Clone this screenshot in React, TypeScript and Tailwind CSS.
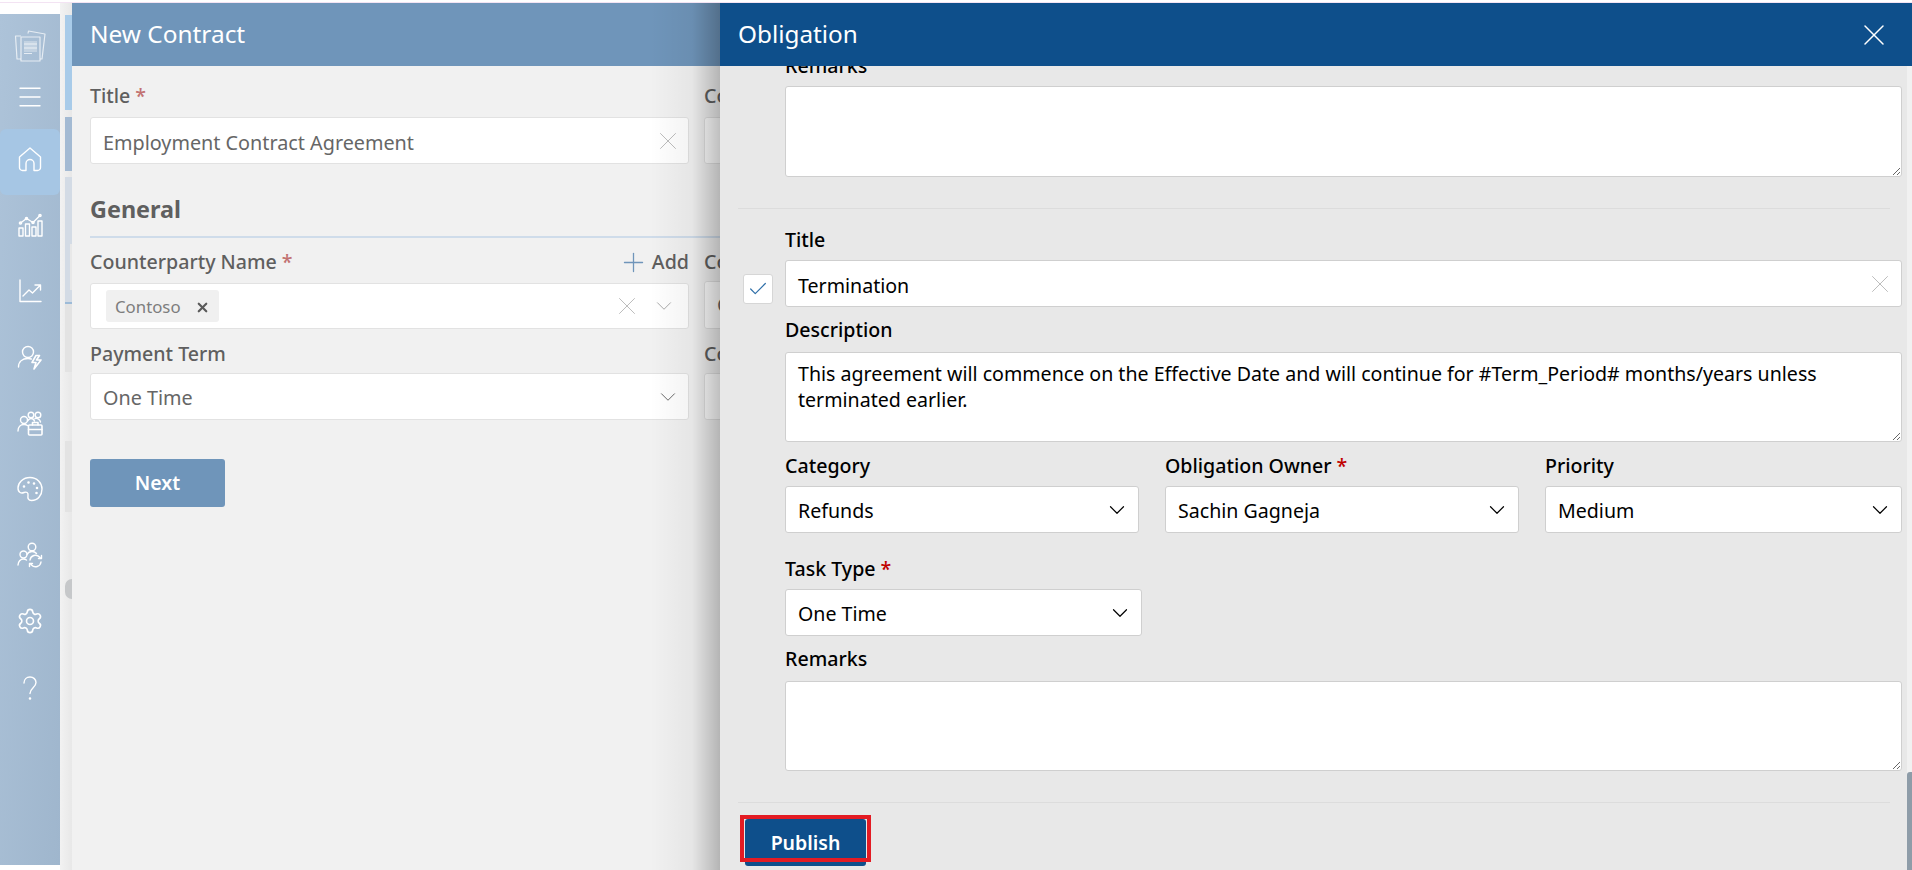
import React from 'react';
import { Menu, Settings, X, ChevronDown, Check, Plus } from 'lucide-react';

const font = { fontFamily: '"Noto Sans", "Open Sans", sans-serif' };

function Icon({ children }: { children: React.ReactNode }) {
  return (
    <svg width="30" height="30" viewBox="0 0 30 30" fill="none" stroke="#ffffff" strokeWidth="1.4" strokeLinecap="round" strokeLinejoin="round">
      {children}
    </svg>
  );
}

function SideItem({ active, children }: { active?: boolean; children: React.ReactNode }) {
  return (
    <div className={`flex h-[66px] items-center justify-center rounded-md pb-[6px] ${active ? 'bg-[#a6c6e4]' : ''}`}>
      {children}
    </div>
  );
}

function Sidebar() {
  return (
    <div className="mt-[11px] flex h-[851px] w-[60px] shrink-0 flex-col bg-gradient-to-br from-[#adc3d9] to-[#9fb6cd]">
      <div className="flex h-[48px] items-end justify-center">
        <svg width="32" height="32" viewBox="0 0 32 32" fill="none" stroke="#ffffff" strokeOpacity="0.7" strokeWidth="1.2" strokeLinejoin="round">
          <path d="M7 6H1.500l1.500 23h4" />
          <path d="M14 3.500l.5-2.500 16.500 3-3 25h-2" />
          <rect x="7" y="7" width="19" height="24" />
          <rect x="10" y="11" width="13" height="11" fill="#ffffff" fillOpacity="0.3" stroke="none" />
          <path d="M10 14h13M10 18h13M10 23.500h8" strokeWidth="1.1" />
        </svg>
      </div>
      <div className="mt-[10px] flex h-[50px] items-center justify-center text-white">
        <Menu size={30} strokeWidth={1.1} />
      </div>
      <div className="h-[7px]" />
      <SideItem active>
        <Icon>
          <path d="M4.500 13L15 4l10.500 9v10.500a3 3 0 0 1-3 3H19v-7a4 4 0 0 0-8 0v7H7.500a3 3 0 0 1-3-3z" />
        </Icon>
      </SideItem>
      <SideItem>
        <Icon>
          <path d="M4 26v-8h4v8zM10.500 26V14h4v12zM17 26v-9h4v9zM23 26V11h4v15z" />
          <path d="M5.500 13l6-4.500 6.500 4 7-7" />
          <circle cx="5.500" cy="13" r="1.100" />
          <circle cx="11.500" cy="8.500" r="1.100" />
          <circle cx="18" cy="12.500" r="1.100" />
          <circle cx="25" cy="5.500" r="1.100" />
        </Icon>
      </SideItem>
      <SideItem>
        <Icon>
          <path d="M5 4v21.500h21" />
          <path d="M8 20l6-6 3.500 3L25 9.500M20 9h5.500v5" />
        </Icon>
      </SideItem>
      <SideItem>
        <Icon>
          <circle cx="13" cy="10" r="5.500" />
          <path d="M3.500 25c0-5.500 4-8.500 9.500-8.500 1.200 0 2.300.2 3.300.5" />
          <path d="M21 13.500l-4 7h4l-2 6.500 7-9h-4.500l3-4.500z" strokeWidth="1.6" />
        </Icon>
      </SideItem>
      <SideItem>
        <Icon>
          <circle cx="9" cy="12" r="3.500" />
          <circle cx="16" cy="7" r="2.800" />
          <circle cx="23" cy="7" r="2.800" />
          <path d="M3 23c0-4 2.500-6.500 6-6.500 1.500 0 2.700.4 3.500 1M12.500 13c1-1.500 2-2.500 3.500-2.500s3 1 3.500 2.500M20 10.500c2.500-.5 5 1 5.500 3.500" />
          <rect x="13.500" y="17" width="13.500" height="10" rx="1" fill="#a5bbd2" strokeWidth="1.6" />
          <path d="M17.500 17v-2.500h5.500V17M13.500 21.500h13.500" strokeWidth="1.6" />
        </Icon>
      </SideItem>
      <SideItem>
        <Icon>
          <path d="M15 3.500C8 3.500 3 8.500 3 14c0 5 3.500 5.500 6 4.500 2.500-1 4.500 0 4 3-.4 2.500 0 5 3.500 5C23 26.500 27 21 27 15S22 3.500 15 3.500z" />
          <circle cx="9" cy="12.500" r=".6" />
          <circle cx="13.500" cy="8.500" r=".6" />
          <circle cx="19" cy="9.500" r=".6" />
          <circle cx="22" cy="14" r=".6" />
          <circle cx="21.500" cy="19" r=".6" />
        </Icon>
      </SideItem>
      <SideItem>
        <Icon>
          <circle cx="17" cy="7" r="3.800" />
          <circle cx="8.500" cy="14.500" r="3.500" />
          <path d="M3 25c0-3.500 2.500-6 5.500-6 1 0 2 .3 3 1M12 14.500c1-2 3-3 5-3s3.500.8 4.500 2" />
          <path d="M15 20a5.500 5.500 0 0 1 9.500-3l1 1.500M26.500 15.500v3h-3M26 22a5.500 5.500 0 0 1-9.500 3l-1-1.500M14.500 26.500v-3h3" />
        </Icon>
      </SideItem>
      <div className="flex h-[60px] items-center justify-center text-white">
        <Settings size={28} strokeWidth={1.4} />
      </div>
      <div className="flex h-[74px] items-center justify-center">
        <Icon>
          <path d="M9 10c0-3.500 2.500-6 6-6s6 2.500 6 5.500c0 5-6 5.500-6 11" />
          <circle cx="15" cy="25.500" r=".6" />
        </Icon>
      </div>
    </div>
  );
}

// the page behind the two panels, only a thin strip of it is visible
function BackStrip() {
  return (
    <div className="relative flex w-[12px] shrink-0 flex-col bg-gradient-to-r from-[#f2f2f2] to-[#e8e8e8] pl-[5px] pt-[12px]">
      <div className="h-[95px] bg-[#a8cbe9]" />
      <div className="mt-[7px] h-[54px] bg-[#a3bad3]" />
      <div className="mt-[6px] flex h-[125px] flex-col items-end bg-[#d3dbe5] pt-[67px]">
        <div className="h-[46px] w-[2px] bg-[#e8e8e8]" />
      </div>
      <div className="h-[2px] bg-[#9dbbd8]" />
      <div className="h-[68px] bg-[#e3e3e3]" />
      <div className="mt-[69px] h-[71px] bg-[#e3e3e3]" />
      <div className="mt-[67px] h-[20px] w-[7px] rounded-l-full bg-[#c6c8ca]" />
    </div>
  );
}

function LeftLabel({ children, required }: { children: React.ReactNode; required?: boolean }) {
  return (
    <div className="h-[24px] whitespace-nowrap text-[19.6px] font-medium leading-[24px] text-[#5f5f5f]">
      {children}
      {required && <span className="ml-[5px] text-[#c27272]">*</span>}
    </div>
  );
}

function LeftBox({ children, h }: { children?: React.ReactNode; h: string }) {
  return (
    <div className={`flex ${h} items-center rounded-[3px] border border-[#e2e2e2] bg-white pl-[12px] text-[19.8px] text-[#666666]`}>
      {children}
    </div>
  );
}

function NewContract() {
  return (
    <div className="flex h-full w-[648px] shrink-0 flex-col overflow-hidden bg-[#f1f1f1]">
      <div className="flex h-[63px] shrink-0 items-center bg-[#6f95ba] pl-[18px] text-[24.4px] text-white">New Contract</div>
      <div className="relative flex-1 pl-[18px]">
        <div className="mt-[18px] grid grid-cols-[599px_599px] gap-x-[15px]">
          <div>
            <LeftLabel required>Title</LeftLabel>
            <div className="mt-[9px]">
              <LeftBox h="h-[47px]">
                <span className="flex-1 pt-[4px]">Employment Contract Agreement</span>
                <X size={30} strokeWidth={0.8} className="mr-[5px] text-[#bdbdbd]" />
              </LeftBox>
            </div>
          </div>
          <div>
            <LeftLabel>Contract Type</LeftLabel>
            <div className="mt-[9px]">
              <LeftBox h="h-[47px]" />
            </div>
          </div>
        </div>
        <div className="mt-[30px] h-[30px] text-[23.4px] font-bold leading-[30px] text-[#5f5f5f]">General</div>
        <div className="mt-[12px] h-[2px] bg-[#cfdcea]" />
        <div className="mt-[12px] grid grid-cols-[599px_599px] gap-x-[15px]">
          <div>
            <div className="flex h-[24px] items-center justify-between">
              <LeftLabel required>Counterparty Name</LeftLabel>
              <div className="flex h-[24px] items-center gap-[3px] text-[19.6px] font-medium leading-[24px] text-[#5f5f5f]">
                <Plus size={31} strokeWidth={1} className="-my-[4px] text-[#6f95ba]" />
                Add
              </div>
            </div>
            <div className="mt-[9px]">
              <LeftBox h="h-[46px]">
                <div className="ml-[3px] flex h-[32px] w-[113px] items-center justify-between rounded-[3px] bg-[#f0f0f0] pl-[9px] pr-[9px] pt-[2px] text-[16.8px] text-[#7d7d7d]">
                  Contoso
                  <X size={15} strokeWidth={3.5} className="text-[#5a5a5a]" />
                </div>
                <X size={30} strokeWidth={0.8} className="ml-auto text-[#bdbdbd]" />
                <ChevronDown size={26} strokeWidth={0.9} className="ml-[9px] mr-[11px] text-[#a8a8a8]" />
              </LeftBox>
            </div>
          </div>
          <div>
            <LeftLabel>Counterparty Contact</LeftLabel>
            <div className="mt-[7px]">
              <LeftBox h="h-[48px]">C</LeftBox>
            </div>
          </div>
        </div>
        <div className="mt-[13px] grid grid-cols-[599px_599px] gap-x-[15px]">
          <div>
            <LeftLabel>Payment Term</LeftLabel>
            <div className="mt-[7px]">
              <LeftBox h="h-[47px]">
                <span className="flex-1 pt-[2px]">One Time</span>
                <ChevronDown size={26} strokeWidth={0.9} className="mr-[7px] text-[#666666]" />
              </LeftBox>
            </div>
          </div>
          <div>
            <LeftLabel>Contract Value</LeftLabel>
            <div className="mt-[7px]">
              <LeftBox h="h-[47px]" />
            </div>
          </div>
        </div>
        <div className="mt-[39px] flex h-[48px] w-[135px] items-center justify-center rounded-[3px] bg-[#6f95ba] text-[19.5px] font-semibold text-white">
          Next
        </div>
      </div>
    </div>
  );
}

function Label({ children, required, className }: { children: React.ReactNode; required?: boolean; className?: string }) {
  return (
    <div className={`h-[24px] whitespace-nowrap text-[19.6px] font-medium leading-[24px] text-black ${className ?? ''}`}>
      {children}
      {required && <span className="ml-[5px] text-[#c00000]">*</span>}
    </div>
  );
}

function Select({ value, className }: { value: string; className?: string }) {
  return (
    <div className={`flex h-[47px] items-center justify-between rounded-[3px] border border-[#cfcfcf] bg-white pl-[12px] pr-[8px] text-[19.6px] text-black ${className ?? ''}`}>
      <span className="pt-[3px]">{value}</span>
      <ChevronDown size={26} strokeWidth={1.1} />
    </div>
  );
}

function Area({ value, h }: { value?: string; h: string }) {
  return (
    <textarea
      readOnly
      defaultValue={value}
      className={`block ${h} w-full rounded-[3px] border border-[#cfcfcf] bg-white px-[12px] py-[8px] text-[19.6px] leading-[26px] text-black`}
    />
  );
}

function Obligation() {
  return (
    <div className="relative z-10 flex h-full min-w-0 flex-1 flex-col bg-[#e8e8e8]">
      <div className="absolute right-full top-0 h-full w-[70px] bg-gradient-to-l from-[#00000040] via-[#0000000c] via-40% to-transparent" />
      <div className="z-10 flex h-[63px] shrink-0 items-center justify-between bg-[#0e4f8b] pl-[18px] pr-[20px] text-[24.3px] text-white">
        Obligation
        <X size={36} strokeWidth={1} />
      </div>
      <div className="flex min-h-0 flex-1">
        <div className="w-[1187px] shrink-0 overflow-hidden">
          <div className="-mt-[12px] pl-[65px] pr-[5px]">
            <Label>Remarks</Label>
            <div className="mt-[8px]">
              <Area h="h-[91px]" />
            </div>
          </div>
          <div className="ml-[18px] mr-[17px] mt-[31px] h-px bg-[#dcdcdc]" />
          <div className="mt-[19px] flex pl-[23px] pr-[5px]">
            <div className="mr-[12px] mt-[46px] flex h-[30px] w-[30px] shrink-0 items-center justify-center rounded-[3px] border border-[#d6d6d6] bg-white text-[#2f6fa8]">
              <Check size={22} strokeWidth={1.3} />
            </div>
            <div className="min-w-0 flex-1">
              <Label>Title</Label>
              <div className="mt-[8px] flex h-[47px] items-center justify-between rounded-[3px] border border-[#cfcfcf] bg-white pl-[12px] pr-[6px] text-[19.6px] text-black">
                <span className="pt-[4px]">Termination</span>
                <X size={30} strokeWidth={0.8} className="text-[#bdbdbd]" />
              </div>
              <Label className="mt-[11px]">Description</Label>
              <div className="mt-[10px]">
                <Area
                  h="h-[90px]"
                  value="This agreement will commence on the Effective Date and will continue for #Term_Period# months/years unless terminated earlier."
                />
              </div>
              <div className="mt-[12px] grid grid-cols-[354px_354px_357px] gap-x-[26px]">
                <div>
                  <Label>Category</Label>
                  <Select value="Refunds" className="mt-[8px]" />
                </div>
                <div>
                  <Label required>Obligation Owner</Label>
                  <Select value="Sachin Gagneja" className="mt-[8px]" />
                </div>
                <div>
                  <Label>Priority</Label>
                  <Select value="Medium" className="mt-[8px]" />
                </div>
              </div>
              <div className="mt-[24px] w-[357px]">
                <Label required>Task Type</Label>
                <Select value="One Time" className="mt-[8px]" />
              </div>
              <Label className="mt-[11px]">Remarks</Label>
              <div className="mt-[10px]">
                <Area h="h-[90px]" />
              </div>
            </div>
          </div>
          <div className="ml-[18px] mr-[17px] mt-[31px] h-px bg-[#dcdcdc]" />
          <div className="relative ml-[25px] mt-[16px] flex h-[47px] w-[121px] items-center justify-center rounded-[3px] bg-[#0e4f8b] text-[19.5px] font-semibold text-white">
            Publish
            <div className="absolute -left-[5px] -top-[4px] h-[47px] w-[131px] border-[4px] border-[#e31b23]" />
          </div>
        </div>
        <div className="flex w-[5px] shrink-0 flex-col justify-end bg-[#f1f1f1]">
          <div className="h-[98px] rounded-tl-[3px] bg-[#8e9ca8]" />
        </div>
      </div>
    </div>
  );
}

export default function App() {
  return (
    <div className="flex h-[870px] w-full flex-col overflow-hidden bg-white" style={font}>
      <div className="h-[3px] shrink-0 border-b border-[#f3e3f3]" />
      <div className="flex min-h-0 flex-1">
        <Sidebar />
        <BackStrip />
        <NewContract />
        <Obligation />
      </div>
    </div>
  );
}
